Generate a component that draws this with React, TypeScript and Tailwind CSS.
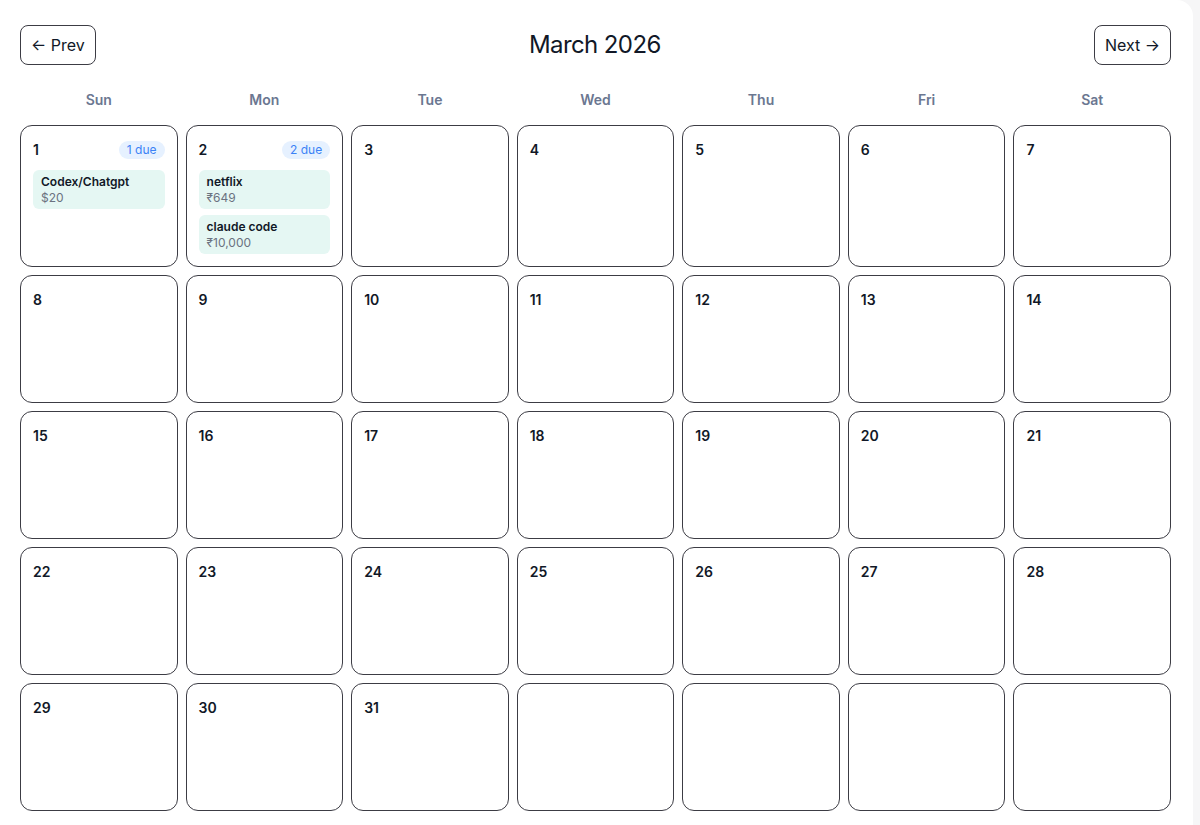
const weekdays = ['Sun', 'Mon', 'Tue', 'Wed', 'Thu', 'Fri', 'Sat'];

type Bill = { name: string; amount: string };

const bills: Record<number, Bill[]> = {
  1: [{ name: 'Codex/Chatgpt', amount: '$20' }],
  2: [
    { name: 'netflix', amount: '₹649' },
    { name: 'claude code', amount: '₹10,000' },
  ],
};

// March 2026 starts on a Sunday, 31 days, padded to 5 full weeks
const days: (number | null)[] = [
  ...Array.from({ length: 31 }, (_, i) => i + 1),
  null, null, null, null,
];

function DayCell({ day }: { day: number | null }) {
  const items = day ? bills[day] ?? [] : [];
  return (
    <div className="min-h-[128px] border border-[#3c3c44] rounded-xl px-3 pt-[14px] pb-3 bg-white">
      {day && (
        <div className="flex items-center justify-between h-5">
          <span className="text-sm font-semibold text-[#111827]">{day}</span>
          {items.length > 0 && (
            <span className="text-xs leading-[18px] px-2 rounded-full bg-[#e6f1ff] text-[#3b82f6]">
              {items.length} due
            </span>
          )}
        </div>
      )}
      {items.length > 0 && (
        <div className="mt-2.5 flex flex-col gap-1.5">
          {items.map((b) => (
            <div key={b.name} className="bg-[#e5f7f3] rounded-md px-2 py-1 h-[39px]">
              <div className="text-xs leading-4 font-semibold text-[#111827]">{b.name}</div>
              <div className="text-xs leading-4 text-[#6b7280]">{b.amount}</div>
            </div>
          ))}
        </div>
      )}
    </div>
  );
}

export default function App() {
  return (
    <div
      className="bg-[#f6f6f7] min-h-screen"
      style={{ fontFamily: 'Inter, "Noto Sans", sans-serif' }}
    >
      <div className="w-[1193px] bg-white rounded-tr-2xl pl-5 pr-[22px] pt-[25px] pb-[15px]">

        {/* Month header */}
        <div className="flex items-center justify-between">
          <button className="h-10 px-2.5 border border-[#3c3c44] rounded-lg text-base text-[#111827] bg-white">
            ← Prev
          </button>
          <h1 className="text-2xl font-normal text-[#111827] tracking-tight">March 2026</h1>
          <button className="h-10 px-2.5 border border-[#3c3c44] rounded-lg text-base text-[#111827] bg-white">
            Next →
          </button>
        </div>

        {/* Weekdays */}
        <div className="grid grid-cols-7 gap-2 mt-[25px] mb-[15px]">
          {weekdays.map((d) => (
            <div key={d} className="text-center text-sm leading-5 font-semibold text-[#6b7791]">
              {d}
            </div>
          ))}
        </div>

        {/* Days */}
        <div className="grid grid-cols-7 gap-2">
          {days.map((d, i) => (
            <DayCell key={i} day={d} />
          ))}
        </div>

      </div>
    </div>
  );
}
